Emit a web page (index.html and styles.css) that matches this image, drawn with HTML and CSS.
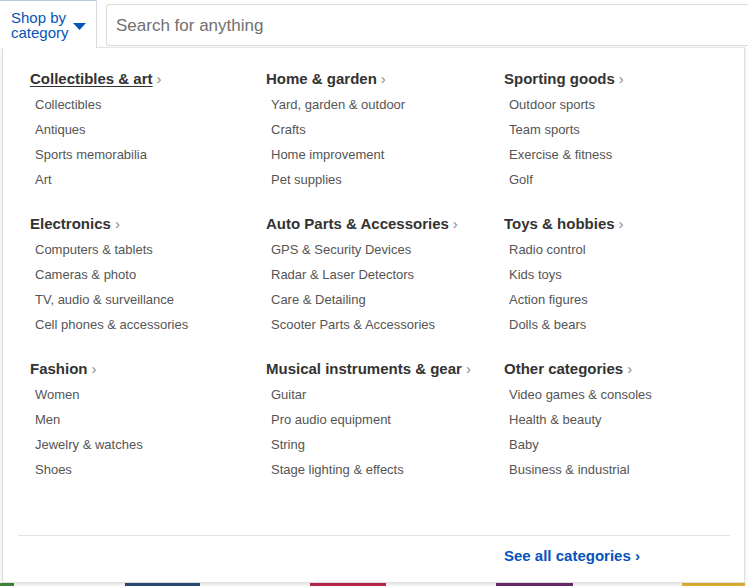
FILE: index.html
```html
<!DOCTYPE html>
<html lang="en">
<head>
<meta charset="utf-8">
<title>Shop by category</title>
<link rel="stylesheet" href="styles.css">
</head>
<body>
<div class="page">
  <header class="header">
    <button class="cat-btn" type="button">
      <span class="cat-label"><span class="cat-line">Shop by</span><span class="cat-line">category</span></span>
      <svg class="caret" width="13" height="7" viewBox="0 0 13 7"><path d="M0 0h13L6.5 7z" fill="#0654ba"/></svg>
    </button>
    <div class="search">Search for anything</div>
  </header>

  <div class="panel">
    <div class="grid">
      <div class="col">
        <section class="group">
          <h3 class="head"><span class="head-text underline">Collectibles &amp; art</span><span class="chev">›</span></h3>
          <ul class="items"><li>Collectibles</li><li>Antiques</li><li>Sports memorabilia</li><li>Art</li></ul>
        </section>
        <section class="group">
          <h3 class="head"><span class="head-text">Electronics</span><span class="chev">›</span></h3>
          <ul class="items"><li>Computers &amp; tablets</li><li>Cameras &amp; photo</li><li>TV, audio &amp; surveillance</li><li>Cell phones &amp; accessories</li></ul>
        </section>
        <section class="group">
          <h3 class="head"><span class="head-text">Fashion</span><span class="chev">›</span></h3>
          <ul class="items"><li>Women</li><li>Men</li><li>Jewelry &amp; watches</li><li>Shoes</li></ul>
        </section>
      </div>
      <div class="col">
        <section class="group">
          <h3 class="head"><span class="head-text">Home &amp; garden</span><span class="chev">›</span></h3>
          <ul class="items"><li>Yard, garden &amp; outdoor</li><li>Crafts</li><li>Home improvement</li><li>Pet supplies</li></ul>
        </section>
        <section class="group">
          <h3 class="head"><span class="head-text">Auto Parts &amp; Accessories</span><span class="chev">›</span></h3>
          <ul class="items"><li>GPS &amp; Security Devices</li><li>Radar &amp; Laser Detectors</li><li>Care &amp; Detailing</li><li>Scooter Parts &amp; Accessories</li></ul>
        </section>
        <section class="group">
          <h3 class="head"><span class="head-text">Musical instruments &amp; gear</span><span class="chev">›</span></h3>
          <ul class="items"><li>Guitar</li><li>Pro audio equipment</li><li>String</li><li>Stage lighting &amp; effects</li></ul>
        </section>
      </div>
      <div class="col">
        <section class="group">
          <h3 class="head"><span class="head-text">Sporting goods</span><span class="chev">›</span></h3>
          <ul class="items"><li>Outdoor sports</li><li>Team sports</li><li>Exercise &amp; fitness</li><li>Golf</li></ul>
        </section>
        <section class="group">
          <h3 class="head"><span class="head-text">Toys &amp; hobbies</span><span class="chev">›</span></h3>
          <ul class="items"><li>Radio control</li><li>Kids toys</li><li>Action figures</li><li>Dolls &amp; bears</li></ul>
        </section>
        <section class="group">
          <h3 class="head"><span class="head-text">Other categories</span><span class="chev">›</span></h3>
          <ul class="items"><li>Video games &amp; consoles</li><li>Health &amp; beauty</li><li>Baby</li><li>Business &amp; industrial</li></ul>
        </section>
      </div>
    </div>
    <div class="divider"></div>
    <div class="footer">
      <a class="see-all" href="#">See all categories ›</a>
    </div>
  </div>

  <div class="strip">
    <span class="seg seg-green"></span>
    <span class="seg seg-gap1"></span>
    <span class="seg seg-blue"></span>
    <span class="seg seg-gap2"></span>
    <span class="seg seg-red"></span>
    <span class="seg seg-gap2"></span>
    <span class="seg seg-purple"></span>
    <span class="seg seg-gap3"></span>
    <span class="seg seg-yellow"></span>
  </div>
</div>
</body>
</html>
```

FILE: styles.css
```css
* { box-sizing: border-box; }

html, body {
  margin: 0;
  padding: 0;
  background: #ffffff;
}

body {
  font-family: "Liberation Sans", Arial, sans-serif;
  color: #333333;
  width: 748px;
  height: 586px;
  overflow: hidden;
}

.page {
  display: flex;
  flex-direction: column;
  height: 586px;
}

.header {
  display: flex;
  align-items: flex-start;
  height: 47px;
}

.cat-btn {
  display: flex;
  align-items: center;
  width: 97px;
  height: 48px;
  margin: 0;
  padding: 0 0 0 11px;
  background: #ffffff;
  border: 1px solid #d6dbe3;
  border-top-color: #b9c8de;
  border-bottom: none;
  border-left: none;
  font-family: "Liberation Sans", Arial, sans-serif;
  position: relative;
  z-index: 2;
}

.cat-label {
  display: flex;
  flex-direction: column;
  font-size: 15px;
  line-height: 15px;
  color: #0654ba;
  text-align: left;
}

.cat-line {
  display: block;
}

.caret {
  margin-left: 4px;
  margin-top: 4px;
}

.search {
  flex: 1;
  margin: 4px 0 0 9px;
  height: 42px;
  border: 1px solid #dcdcdc;
  border-right: none;
  border-radius: 3px 0 0 3px;
  padding-left: 9px;
  font-size: 17px;
  line-height: 41px;
  color: #707070;
}

.panel {
  margin-left: 2px;
  width: 743px;
  height: 536px;
  border: 1px solid #dedede;
  border-top-color: #e4e4e4;
  background: #ffffff;
  box-shadow: 0 2px 4px rgba(0, 0, 0, 0.12);
  display: flex;
  flex-direction: column;
  position: relative;
  z-index: 1;
}

.grid {
  flex: 1;
  display: grid;
  grid-template-columns: 236px 238px 1fr;
  padding: 17.5px 0 0 27px;
}

.group {
  margin-bottom: 18.5px;
}

.head {
  margin: 0;
  font-size: 15px;
  font-weight: bold;
  line-height: 26.5px;
  color: #333333;
  white-space: nowrap;
}

.head-text.underline {
  text-decoration: underline;
  text-underline-offset: 2px;
}

.chev {
  margin-left: 4px;
  color: #8a8a8a;
  font-weight: normal;
  font-size: 15px;
}

.items {
  list-style: none;
  margin: 0;
  padding: 0 0 0 5px;
}

.items li {
  font-size: 13px;
  line-height: 25px;
  color: #555555;
  white-space: nowrap;
}

.divider {
  height: 1px;
  margin: 0 14px 0 15px;
  background: #e2e2e2;
}

.footer {
  height: 46px;
  display: grid;
  grid-template-columns: 501px 1fr;
  padding-top: 11px;
}

.see-all {
  grid-column: 2;
  font-size: 15px;
  font-weight: bold;
  line-height: 18px;
  color: #0654ba;
  text-decoration: none;
}

.strip {
  display: flex;
  height: 3px;
}

.seg { display: block; height: 3px; }
.seg-green { width: 14px; background: #3f8a3a; }
.seg-gap1 { width: 111px; }
.seg-blue { width: 75px; background: #2a4d78; }
.seg-gap2 { width: 110px; }
.seg-red { width: 76px; background: #c0284f; }
.seg-purple { width: 77px; background: #6b2a6e; }
.seg-gap3 { width: 109px; }
.seg-yellow { width: 63px; background: #e5b735; }
```
